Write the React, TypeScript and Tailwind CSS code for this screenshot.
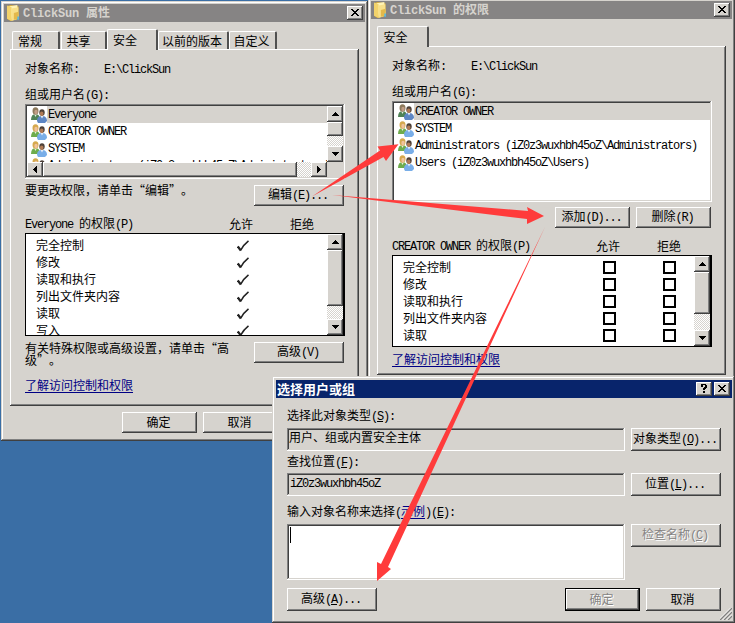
import type { ReactNode } from 'react';
import clsx from 'clsx';

const raised =
  'bg-[#d6d3ce] shadow-[inset_-1px_-1px_#404040,inset_1px_1px_#fff,inset_-2px_-2px_#808080]';
const frame =
  'bg-[#d6d3ce] shadow-[inset_-1px_-1px_#404040,inset_1px_1px_#d6d3ce,inset_-2px_-2px_#808080,inset_2px_2px_#fff]';
const sunken =
  'shadow-[inset_-1px_-1px_#fff,inset_1px_1px_#808080,inset_-2px_-2px_#d6d3ce,inset_2px_2px_#404040]';

const permissions = ['完全控制', '修改', '读取和执行', '列出文件夹内容', '读取', '写入'];

// Latin runs sit on a 6px cell, half the width of a Chinese glyph. "&" marks the access key.
function T({ children, bold }: { children: string; bold?: boolean }) {
  const runs = children.match(/[\x20-\x7e]+|[^\x20-\x7e]+/g) ?? [];
  return (
    <span className="whitespace-pre">
      {runs.map((run, i) => {
        if (run.charCodeAt(0) > 126) return <span key={i}>{run}</span>;
        const [head, tail] = run.split('&');
        return (
          <span
            key={i}
            className={clsx(
              "font-['Liberation_Mono']",
              bold ? 'text-[12px] tracking-[-0.2px]' : 'text-[12px] tracking-[-1.2px]',
            )}
          >
            {head}
            {tail && <u>{tail[0]}</u>}
            {tail?.slice(1)}
          </span>
        );
      })}
    </span>
  );
}

function Button({ label, className, disabled, isDefault }: { label: string; className?: string; disabled?: boolean; isDefault?: boolean }) {
  return (
    <button
      className={clsx(
        'flex shrink-0 items-center justify-center pr-0.5 pb-0.5',
        isDefault
          ? 'border border-black bg-[#d6d3ce] shadow-[inset_-1px_-1px_#404040,inset_1px_1px_#fff,inset_-2px_-2px_#808080]'
          : raised,
        disabled && 'text-[#868484] [text-shadow:1px_1px_#fff]',
        className,
      )}
    >
      <T>{label}</T>
    </button>
  );
}

function CaptionButton({ help }: { help?: boolean }) {
  return (
    <button className={clsx(raised, 'flex h-3.5 w-4 items-center justify-center pb-px')}>
      {help ? (
        <svg width="8" height="9" viewBox="0 0 8 9" shapeRendering="crispEdges">
          <path d="M1 0h5v1h1v3H6v1H5v1H3V4h1V3h1V1H3v2H1V1H1zM3 7h2v2H3z" />
        </svg>
      ) : (
        <svg width="8" height="7" viewBox="0 0 8 7" shapeRendering="crispEdges">
          <path d="M0 0h2v1h1v1h2V1h1V0h2v1H7v1H6v1H5v1h1v1h1v1h1v1H6V6H5V5H3v1H2v1H0V6h1V5h1V4h1V3H2V2H1V1H0z" />
        </svg>
      )}
    </button>
  );
}

function FolderIcon() {
  return (
    <svg width="16" height="16" viewBox="2 1 14 14">
      <path d="M2 2l3-1 7 1v11l-7 2-3-2z" fill="#d9ad3a" />
      <path d="M4 2l7-1 1 11-6 2z" fill="#fff3b5" />
      <path d="M2 1.500l4 1.500v12l-4-2z" fill="#f3d36b" />
      <path d="M6 4l6-1v10l-6 2z" fill="#f8e08a" />
      <path d="M8 8l4-1v6l-4 1z" fill="#e3b94b" />
      <path d="M11 11h1.500v3H11z" fill="#58b8e0" />
    </svg>
  );
}

function UsersIcon({ dim }: { dim?: boolean }) {
  return (
    <svg width="16" height="16" viewBox="0 0 16 16" className="shrink-0">
      <path d="M0 13c0-4 1.500-6 4.500-6S9 9 9 13z" fill={dim ? '#4f8256' : '#6fac4c'} />
      <path d="M3 7l1.500 3L6 7z" fill="#e6efe0" />
      <ellipse cx="4.500" cy="4" rx="3" ry="3.700" fill={dim ? '#8d7a5c' : '#d5a94e'} />
      <ellipse cx="5" cy="5" rx="1.700" ry="2.200" fill={dim ? '#c19d86' : '#f0c39c'} />
      <path d="M6 14c0-3.500 1.500-5 5-5s5 2 5 5l-2 2H7z" fill={dim ? '#5d86c4' : '#79aee8'} />
      <path d="M9.500 9l1.500 2.500L12.500 9z" fill="#e4edf8" />
      <ellipse cx="11" cy="5.500" rx="2.700" ry="3.300" fill="#4d4038" />
      <ellipse cx="10.700" cy="6.700" rx="1.800" ry="2.300" fill="#b07a55" />
    </svg>
  );
}

function Arrow({ dir, className }: { dir: 'up' | 'down' | 'left' | 'right'; className?: string }) {
  const shapes = {
    up: 'M3 0h1v1h1v1h1v1h1v1H0V3h1V2h1V1h1z',
    down: 'M0 0h7v1H6v1H5v1H4v1H3V3H2V2H1V1H0z',
    left: 'M3 0h1v7H3V6H2V5H1V4H0V3h1V2h1V1h1z',
    right: 'M0 0h1v1h1v1h1v1h1v1H3v1H2v1H1v1H0z',
  };
  const tall = dir === 'left' || dir === 'right';
  return (
    <div className={clsx(raised, 'flex shrink-0 items-center justify-center', className)}>
      <svg width={tall ? 4 : 7} height={tall ? 7 : 4} shapeRendering="crispEdges">
        <path d={shapes[dir]} />
      </svg>
    </div>
  );
}

const track = 'bg-[repeating-conic-gradient(#fff_0_25%,#d6d3ce_0_50%)] bg-[length:2px_2px]';

function VScroll({ thumb }: { thumb: string }) {
  return (
    <div className={clsx(track, 'flex w-4 shrink-0 flex-col')}>
      <Arrow dir="up" className="h-4 w-4" />
      <div className={clsx(raised, thumb)} />
      <Arrow dir="down" className="mt-auto h-4 w-4" />
    </div>
  );
}

function Title({ children, active, buttons }: { children: ReactNode; active?: boolean; buttons: ReactNode }) {
  return (
    <div
      className={clsx(
        'flex h-[18px] items-center pr-0.5 font-bold',
        active ? 'bg-[#08246b] pl-px text-[13px] text-white' : 'bg-[#868484] pl-[3px] text-[#d6d3ce]',
      )}
    >
      {children}
      <div className="ml-auto flex gap-0.5">{buttons}</div>
    </div>
  );
}

function Tab({ label, active, className }: { label: string; active?: boolean; className: string }) {
  return (
    <div
      className={clsx(
        'flex shrink-0 justify-center rounded-t-[2px] border-t border-l border-r-2 border-t-white border-l-white border-r-[#505050] bg-[#d6d3ce]',
        active ? 'relative z-10 -mb-px h-[21px] pt-0.5' : 'h-[18px] pt-px',
        className,
      )}
    >
      <T>{label}</T>
    </div>
  );
}

function UserRow({ name, selected }: { name: string; selected?: boolean }) {
  return (
    <div className="flex h-[17px] items-center bg-white pl-1">
      <UsersIcon dim={selected} />
      <div className={clsx('flex h-full flex-1 items-center pb-0.5 pl-px', selected && 'bg-[#d6d3ce]')}>
        <T>{name}</T>
      </div>
    </div>
  );
}

function Check() {
  return (
    <svg width="12" height="12" viewBox="0 0 12 12" fill="none" stroke="#222">
      <path d="M.8 6.500l3 4" strokeWidth="2.200" />
      <path d="M3.500 10.500C5.500 6.500 8 3.500 11.500.8" strokeWidth="1.600" />
    </svg>
  );
}

function PermissionList({ rows, checked, className, thumb }: { rows: string[]; checked?: boolean; className: string; thumb: string }) {
  return (
    <div className={clsx('flex w-80 overflow-hidden border border-r-2 border-black bg-white', className)}>
      <div className="w-[302px] pt-[3px]">
        {rows.map((row) => (
          <div key={row} className="flex h-[17px] items-center pl-2.5">
            <div className="w-[200px] pb-0.5">
              <T>{row}</T>
            </div>
            {checked ? (
              <div className="pl-px">
                <Check />
              </div>
            ) : (
              <div className="flex gap-[47px]">
                <div className="size-[13px] border-2 border-black" />
                <div className="size-[13px] border-2 border-black" />
              </div>
            )}
          </div>
        ))}
      </div>
      <VScroll thumb={thumb} />
    </div>
  );
}

function ObjectHeader() {
  return (
    <>
      <div className="flex h-5 items-center pb-px">
        <div className="w-[79px]">
          <T>对象名称:</T>
        </div>
        <T>E:\ClickSun</T>
      </div>
      <div className="mt-[7px] flex h-[18px] items-center">
        <T>组或用户名(G):</T>
      </div>
    </>
  );
}

function PermissionHeader({ label }: { label: string }) {
  return (
    <div className="flex h-[18px] items-center">
      <div className="w-[204px]">
        <T>{label}</T>
      </div>
      <div className="w-[61px]">允许</div>
      <div>拒绝</div>
    </div>
  );
}

function HelpLink() {
  return <a className="text-[#000084] underline underline-offset-2">了解访问控制和权限</a>;
}

function PropertiesWindow() {
  return (
    <section className={clsx(frame, 'absolute top-px left-px h-[440px] w-[367px] p-[3px]')}>
      <Title buttons={<CaptionButton />}>
        <FolderIcon />
        <T bold>ClickSun 属性</T>
      </Title>
      <div className="flex h-[27px] items-end pl-2">
        <Tab label="常规" className="w-12 pr-[11px]" />
        <Tab label="共享" className="ml-px w-[46px] pr-2.5" />
        <Tab label="安全" active className="w-[51px] pr-3.5" />
        <Tab label="以前的版本" className="w-[71px] pr-0.5" />
        <Tab label="自定义" className="w-12 pr-0.5" />
      </div>
      <div className={clsx(raised, 'ml-1.5 h-[357px] w-[349px] pt-2.5 pl-[15px]')}>
        <ObjectHeader />
        <div className={clsx(sunken, 'flex h-[75px] w-80 bg-white p-0.5')}>
          <div className="flex w-[300px] flex-col">
            <div className="h-14 overflow-hidden">
              <UserRow name="Everyone" selected />
              <UserRow name="CREATOR OWNER" />
              <UserRow name="SYSTEM" />
              <UserRow name="Administrators (iZ0z3wuxhbh45oZ\Administrators)" />
            </div>
            <div className={clsx(track, 'flex h-[15px]')}>
              <Arrow dir="left" className="h-[15px] w-4" />
              <div className={clsx(raised, 'w-[254px]')} />
              <Arrow dir="right" className="ml-auto h-[15px] w-4" />
            </div>
          </div>
          <div className="flex w-4 flex-col bg-[#d6d3ce]">
            <div className="flex h-14">
              <VScroll thumb="h-3.5" />
            </div>
          </div>
        </div>
        <div className="flex h-[27px] w-[319px] justify-between">
          <div className="pt-[3px]">要更改权限，请单击“编辑”。</div>
          <Button label="编辑(E)..." className="mt-1.5 h-[21px] w-[90px]" />
        </div>
        <div className="mt-[9px]">
          <PermissionHeader label="Everyone 的权限(P)" />
        </div>
        <PermissionList rows={permissions} checked className="h-[103px]" thumb="h-[56px]" />
        <div className="mt-1.5 flex w-[319px] justify-between">
          <div className="w-[216px] leading-3">有关特殊权限或高级设置，请单击“高<br />级”。</div>
          <Button label="高级(V)" className="h-[21px] w-[90px]" />
        </div>
        <div className="mt-[11px]">
          <HelpLink />
        </div>
      </div>
      <div className="mt-1.5 flex gap-1.5 pl-[118px]">
        <Button label="确定" className="h-[21px] w-[75px]" />
        <Button label="取消" className="h-[21px] w-[75px]" />
      </div>
    </section>
  );
}

function PermissionsWindow() {
  return (
    <section className={clsx(frame, 'absolute -top-0.5 left-[368px] h-[440px] w-[367px] p-[3px]')}>
      <Title buttons={<CaptionButton />}>
        <FolderIcon />
        <T bold>ClickSun 的权限</T>
      </Title>
      <div className="flex h-[27px] items-end pl-1.5">
        <Tab label="安全" active className="w-[52px] pr-3.5" />
      </div>
      <div className={clsx(raised, 'ml-1.5 h-[329px] w-[349px] pt-2.5 pl-[15px]')}>
        <ObjectHeader />
        <div className={clsx(sunken, 'h-[101px] w-80 bg-white p-0.5')}>
          <UserRow name="CREATOR OWNER" selected />
          <UserRow name="SYSTEM" />
          <UserRow name="Administrators (iZ0z3wuxhbh45oZ\Administrators)" />
          <UserRow name="Users (iZ0z3wuxhbh45oZ\Users)" />
        </div>
        <div className="mt-[5px] flex w-[319px] justify-end gap-1.5">
          <Button label="添加(D)..." className="h-[21px] w-[75px]" />
          <Button label="删除(R)" className="h-[21px] w-[75px]" />
        </div>
        <div className="mt-[9px]">
          <PermissionHeader label="CREATOR OWNER 的权限(P)" />
        </div>
        <PermissionList rows={permissions.slice(0, 5)} className="h-[92px]" thumb="h-[42px]" />
        <div className="mt-1">
          <HelpLink />
        </div>
      </div>
    </section>
  );
}

function SelectDialog() {
  return (
    <section className={clsx(frame, 'absolute top-[376px] left-[272px] h-[247px] w-[463px] py-1 pr-[3px] pl-1')}>
      <Title
        active
        buttons={
          <>
            <CaptionButton help />
            <CaptionButton />
          </>
        }
      >
        选择用户或组
      </Title>
      <div className="grid grid-cols-[338px_90px] gap-x-1.5 pt-[9px] pl-[11px]">
        <div className="col-span-2 h-[21px]">
          <T>选择此对象类型(&S):</T>
        </div>
        <div className={clsx(sunken, 'h-[23px] pt-px pl-0.5')}>用户、组或内置安全主体</div>
        <Button label="对象类型(&O)..." className="h-[23px]" />
        <div className="col-span-2 h-[22px] pt-0.5">
          <T>查找位置(&F):</T>
        </div>
        <div className={clsx(sunken, 'h-[23px] pt-px pl-[3px]')}>
          <T>iZ0z3wuxhbh45oZ</T>
        </div>
        <Button label="位置(&L)..." className="h-[23px]" />
        <div className="col-span-2 h-[28px] pt-[7px]">
          <T>输入对象名称来选择(</T>
          <a className="text-[#000084] underline underline-offset-2">示例</a>
          <T>)(&E):</T>
        </div>
        <div className={clsx(sunken, 'h-14 bg-white pt-[3px] pl-[3px]')}>
          <div className="h-4 w-px bg-black" />
        </div>
        <Button label="检查名称(&C)" disabled className="h-[23px]" />
      </div>
      <div className="mt-2 flex w-[445px] pl-[11px]">
        <Button label="高级(&A)..." className="h-[23px] w-[90px]" />
        <Button label="确定" disabled isDefault className="mr-1.5 ml-auto h-[23px] w-[75px]" />
        <Button label="取消" className="h-[23px] w-[75px]" />
      </div>
      <svg className="absolute right-[3px] bottom-[3px]" width="12" height="12" strokeWidth="1.400">
        <path d="M0 12L12 0M4 12l8-8M8 12l4-4" stroke="#808080" />
        <path d="M-1.500 12L12-1.500M2.500 12L12 2.500M6.500 12L12 6.500" stroke="#fff" strokeWidth=".8" />
      </svg>
    </section>
  );
}

export default function App() {
  return (
    <main className="relative h-[623px] w-[735px] overflow-hidden bg-[#3a6ea5] font-['Noto_Sans_CJK_SC',sans-serif] text-[12px] leading-4 text-black [text-spacing-trim:space-all]">
      <PropertiesWindow />
      <PermissionsWindow />
      <SelectDialog />
      <svg className="pointer-events-none absolute inset-0" width="735" height="623" fill="#ff3b3b">
        <path d="M312 196.500L380 150.500l-2.500-4 21-2.200L386 161l-2.500-4z" />
        <path d="M332 195l196 16-1-4 17 9-17 8v-5z" />
        <path d="M545 227L381 564l-4-2v19l14-12-3-2z" />
      </svg>
    </main>
  );
}
